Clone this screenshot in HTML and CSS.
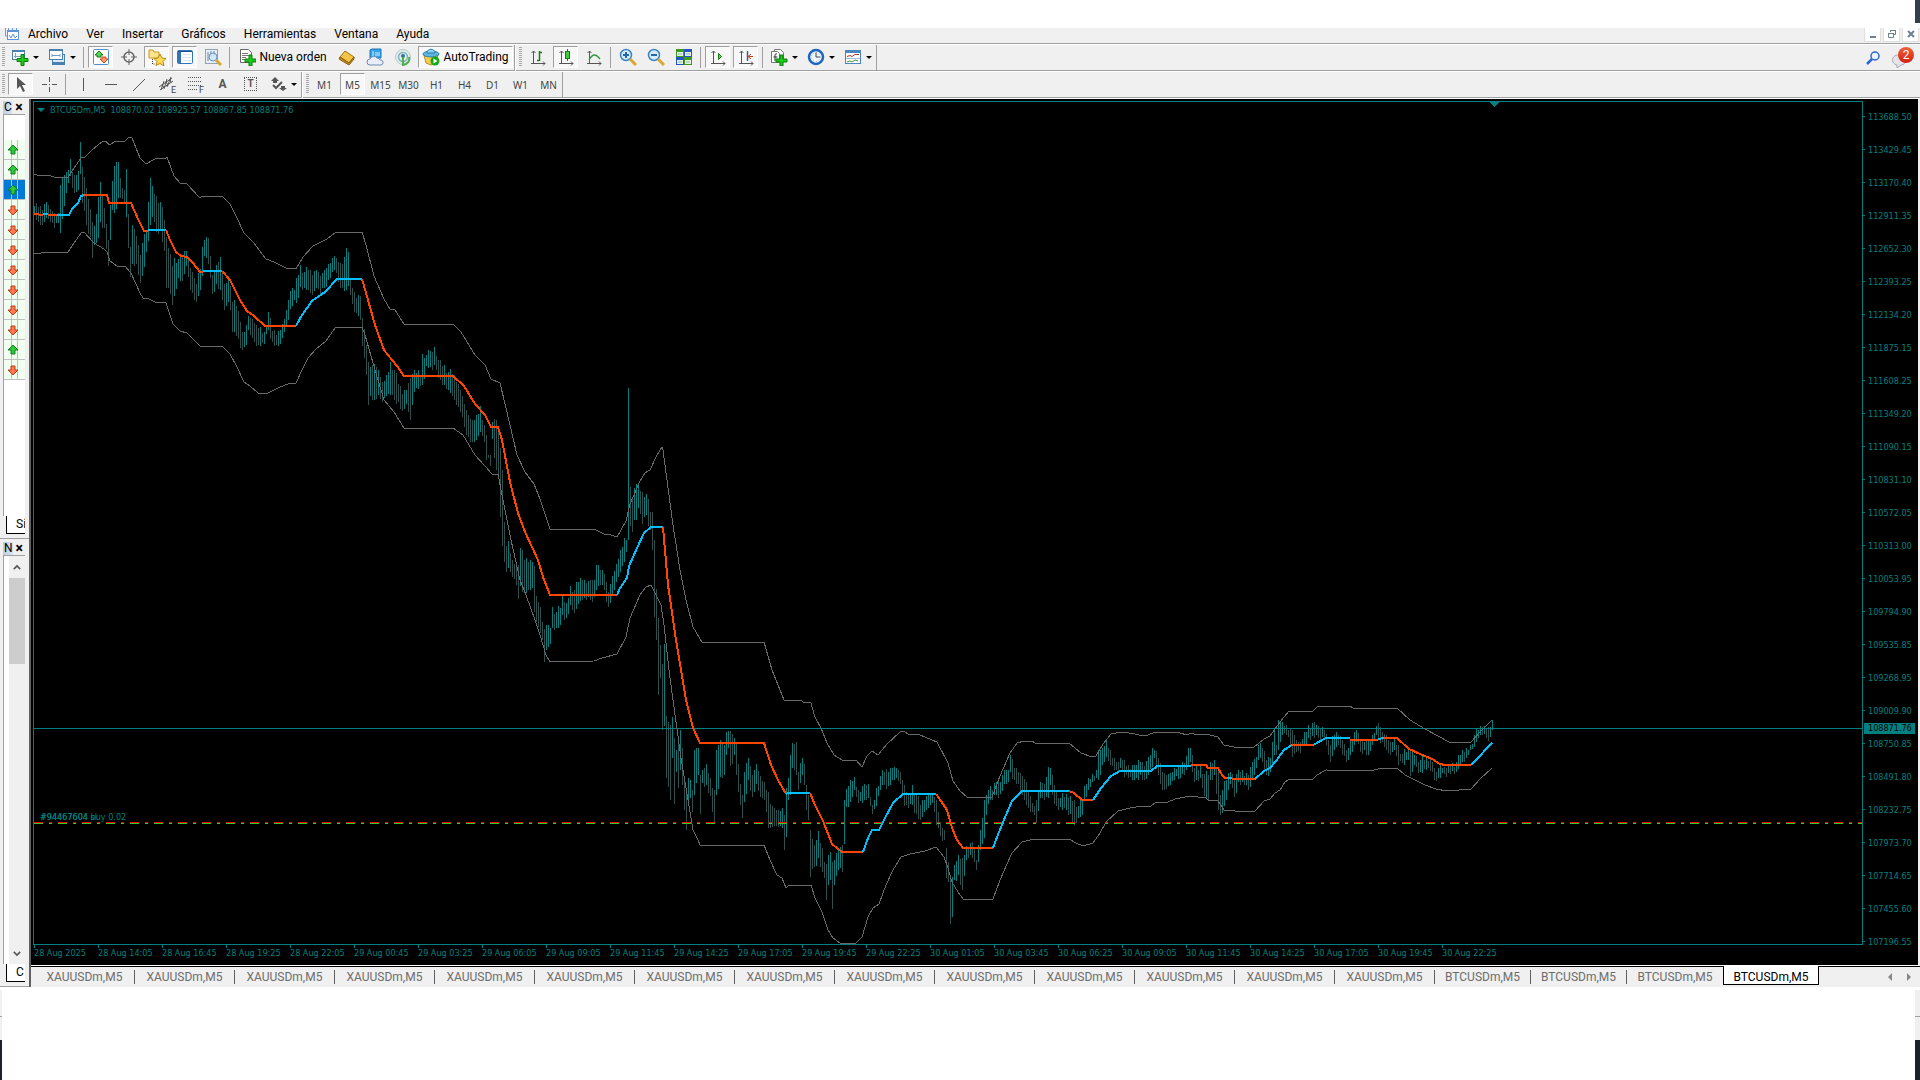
FILE: index.html
```html
<!DOCTYPE html>
<html lang="es">
<head>
    <meta charset="UTF-8">
    <meta name="viewport" content="width=device-width, initial-scale=1.0">
    <title>BTCUSDm,M5</title>
    <link rel="stylesheet" href="styles.css">
</head>
<body>
    <header class="title-strip"><span class="desktop-edge"></span></header>

    <!-- Menu -->
    <nav class="menubar" aria-label="Menú">
        <svg class="app-icon" viewBox="0 0 16 12" aria-hidden="true"><path d="M1.500 0v8H4M4.500 0v2M8.500 0v2M12.500 0v2" fill="none" stroke="#6b9be0"/><rect x="3.500" y="2.500" width="11" height="9" fill="#fff" stroke="#5f93dd"/><path d="M3 3h12" stroke="#5f93dd" stroke-width="2"/><path d="M5 7l2 3 2-4 2 4 2-2" fill="none" stroke="#5f93dd"/></svg>
        <a href="#">Archivo</a>
        <a href="#">Ver</a>
        <a href="#">Insertar</a>
        <a href="#">Gráficos</a>
        <a href="#">Herramientas</a>
        <a href="#">Ventana</a>
        <a href="#">Ayuda</a>
        <div class="window-buttons">
            <button aria-label="Minimizar"><svg viewBox="0 0 10 10"><path d="M2 8h6" stroke="#6f8194" stroke-width="2"/></svg></button>
            <button aria-label="Restaurar"><svg viewBox="0 0 10 10"><path d="M3.500 3V1.500h5v4H7M3 1.500h6M1.500 4.500h5v4h-5zM1 4.500h6" fill="none" stroke="#6f8194"/></svg></button>
            <button aria-label="Cerrar"><svg viewBox="0 0 10 10"><path d="M2 2l6 6M8 2l-6 6" stroke="#6f8194" stroke-width="2"/></svg></button>
        </div>
    </nav>

    <!-- Standard toolbar -->
    <div class="toolbar">
        <div class="band">
            <span class="grip"></span>
            <button class="tool drop" aria-label="Nuevo gráfico"><svg viewBox="0 0 18 18"><rect x="1.500" y="2.500" width="12" height="9" fill="#fff" stroke="#4a7fae"/><path d="M1 3h13" stroke="#4a7fae" stroke-width="2"/><path d="M4.500 5v5M3 8.500h8" stroke="#7f9db5"/><path class="plus" d="M10 6.500h3v4h4v3h-4v4h-3v-4H6v-3h4z"/></svg></button>
            <button class="tool drop" aria-label="Perfiles"><svg viewBox="0 0 18 18"><rect x="4.500" y="6.500" width="12" height="10" fill="#d7e8f8" stroke="#4a7fae"/><rect x="1.500" y="1.500" width="13" height="10" fill="#fff" stroke="#4a7fae"/><path d="M1 2h14M4 15h12" stroke="#4a7fae" stroke-width="2"/><path d="M4 7.500h8M4 6v3M12 6v3" stroke="#6f9fc4"/></svg></button>
            <span class="sep"></span>
            <button class="tool on" aria-label="Observación de mercado"><svg viewBox="0 0 18 18"><rect x="1.500" y="1.500" width="15" height="15" rx="1" fill="#fff" stroke="#4f8fcc"/><path d="M7 3l4 4H9v2H5V7H3z" fill="#5fd05f" stroke="#118011"/><path d="M12 15l-4-4h2V9h4v2h2z" fill="#ff9a6c" stroke="#d8481c"/></svg></button>
            <button class="tool" aria-label="Ventana de datos"><svg viewBox="0 0 18 18"><circle cx="9" cy="9" r="5" fill="none" stroke="#666" stroke-width="1.500"/><path d="M9 1v6M9 11v6M1 9h6M11 9h6" stroke="#666"/></svg></button>
            <button class="tool on" aria-label="Navegador"><svg viewBox="0 0 18 18"><path d="M1 2h4l1 2h5v6H1z" fill="#ffe38a" stroke="#c79a2b"/><path d="M4.500 11v5h3" fill="none" stroke="#444" stroke-dasharray="1 1"/><path d="M12 6l2 4 4 .5-3 3 1 4.500-4-2.500L8 17.500l1-4-3-3 4-.5z" fill="#ffd94f" stroke="#b78619"/></svg></button>
            <button class="tool on" aria-label="Terminal"><svg viewBox="0 0 18 18"><rect x="1.500" y="2.500" width="15" height="13" rx="1" fill="#fff" stroke="#3275b8"/><path d="M2 3.500h14" stroke="#1d4f8b"/><path d="M3.500 4v11" stroke="#3275b8" stroke-width="3"/><path d="M7 6.500h8M7 9.500h8M7 12.500h8" stroke="#d9e4ee"/></svg></button>
            <button class="tool" aria-label="Probador de estrategias"><svg viewBox="0 0 18 18"><rect x="1.500" y="1.500" width="12" height="14" fill="#e8f0f6" stroke="#8ba4b8"/><path d="M4 4v9M7 3v6M10 3v5" stroke="#6b88a0"/><circle cx="9" cy="9" r="4" fill="#cfe6f8" fill-opacity=".8" stroke="#6297c4"/><path d="M12 12l5 5" stroke="#d8a72f" stroke-width="3"/></svg></button>
            <span class="sep"></span>
            <button class="tool order"><svg viewBox="0 0 18 18"><path d="M2.500 1.500h8l3 3v10h-11z" fill="#fff" stroke="#666"/><path d="M4 5.500h6M4 7.500h7M4 9.500h4M4 11.500h3" stroke="#777"/><path class="plus" d="M11 7h3v4h4v3h-4v4h-3v-4H7v-3h4z"/></svg>Nueva orden</button>
            <button class="tool" aria-label="MetaEditor"><svg viewBox="0 0 18 18"><path d="M7 3l9 6-5 6-9-6z" fill="#f3c448" stroke="#a0721a"/><path d="M2 9l9 6 5-6v2l-5 6-10-6z" fill="#c58a1e" stroke="#8a5d10"/></svg></button>
            <button class="tool" aria-label="VPS"><svg viewBox="0 0 18 18"><path d="M4 2l2-1h9v9H4z" fill="#37a2ea" stroke="#1976bd"/><path d="M7 3v7M9 5h5M9 7h5" stroke="#d6f0ff"/><path d="M4 17a3 3 0 010-6 4 4 0 017-1 3 3 0 013 2 2.500 2.500 0 011 5z" fill="#e7eef8" stroke="#6d8bb5"/></svg></button>
            <button class="tool" aria-label="Señales"><svg viewBox="0 0 18 18"><circle cx="9" cy="9" r="7.500" fill="#e3efe6" stroke="#b6cbd2"/><circle cx="9" cy="9" r="4.500" fill="none" stroke="#7fb0bb" stroke-width="1.500"/><circle cx="9" cy="8" r="2" fill="#2f6fb0"/><path d="M9 9v8c5-1 7-4 6-8" fill="none" stroke="#4fae4f" stroke-width="2"/></svg></button>
            <button class="tool on auto"><svg viewBox="0 0 18 18"><path d="M2 7h14l-2 8-5 2-5-2z" fill="#f3cf4f" stroke="#b98c20"/><ellipse cx="9" cy="6" rx="8" ry="3" fill="#5fb4e0" stroke="#2d80b0"/><path d="M5 5c0-5 8-5 8 0z" fill="#8dd0f0" stroke="#2d80b0"/><circle cx="13" cy="13" r="4.500" fill="#19a819"/><path d="M11.500 10.500v5l4-2.500z" fill="#fff"/></svg>AutoTrading</button>
        </div>
        <div class="band">
            <span class="grip"></span>
            <button class="tool" aria-label="Barras"><svg viewBox="0 0 18 18"><path class="axes" d="M4.500 3v13M2 15.500h14M2.500 5l2-2 2 2M14 13.500l2 2-2 2"/><path d="M10.500 3v10M8 12.500h2M11 4.500h2" stroke="#138013" stroke-width="1.500"/></svg></button>
            <button class="tool on" aria-label="Velas"><svg viewBox="0 0 18 18"><path class="axes" d="M4.500 3v13M2 15.500h14M2.500 5l2-2 2 2M14 13.500l2 2-2 2"/><path d="M10.500 1v12" stroke="#138013"/><rect x="8.500" y="3.500" width="4" height="7" fill="#3ccc3c" stroke="#138013"/></svg></button>
            <button class="tool" aria-label="Línea"><svg viewBox="0 0 18 18"><path class="axes" d="M4.500 3v13M2 15.500h14M2.500 5l2-2 2 2M14 13.500l2 2-2 2"/><path d="M4 12c4-7 7-6 11-1" fill="none" stroke="#2f9a3f" stroke-width="1.500"/></svg></button>
            <span class="sep"></span>
            <button class="tool" aria-label="Acercar"><svg viewBox="0 0 18 18"><circle cx="7" cy="7" r="5.500" fill="#d6ecfb" stroke="#3c84c4" stroke-width="1.500"/><path d="M4 7h6M7 4v6" stroke="#2468a8" stroke-width="2"/><path d="M11 11l6 6" stroke="#d8a72f" stroke-width="3"/></svg></button>
            <button class="tool" aria-label="Alejar"><svg viewBox="0 0 18 18"><circle cx="7" cy="7" r="5.500" fill="#d6ecfb" stroke="#3c84c4" stroke-width="1.500"/><path d="M4 7h6" stroke="#2468a8" stroke-width="2"/><path d="M11 11l6 6" stroke="#d8a72f" stroke-width="3"/></svg></button>
            <button class="tool" aria-label="Mosaico"><svg viewBox="0 0 18 18"><path d="M1 1h8v8H1zM9 9h8v8H9z" fill="#3f9a1c"/><path d="M9 1h8v8H9zM1 9h8v8H1z" fill="#2354c4"/><path d="M2 4h6v4H2zM10 4h6v4h-6zM2 12h6v4H2zM10 12h6v4h-6z" fill="#e6f2e0"/><path d="M3 6h4M11 6h4M3 14h4M11 14h4" stroke="#8ab0c8"/></svg></button>
            <span class="sep"></span>
            <button class="tool on" aria-label="Autodesplazamiento"><svg viewBox="0 0 18 18"><path class="axes" d="M4.500 3v13M2 15.500h14M2.500 5l2-2 2 2M14 13.500l2 2-2 2"/><path d="M9.500 5.500v6l3-3z" fill="#5fd05f" stroke="#138013"/></svg></button>
            <button class="tool on" aria-label="Desplazamiento"><svg viewBox="0 0 18 18"><path class="axes" d="M4.500 3v13M2 15.500h14M2.500 5l2-2 2 2M14 13.500l2 2-2 2"/><path d="M10.500 3v10" stroke="#2468a8" stroke-width="1.500"/><path d="M16 8.500h-4M14 6l-3 2.500 3 2.500" fill="none" stroke="#c83c10"/></svg></button>
            <span class="sep"></span>
            <button class="tool drop" aria-label="Indicadores"><svg viewBox="0 0 18 18"><path d="M4.500 1.500h6l3 3v8h-9z" fill="#fff" stroke="#777"/><path d="M1.500 3.500h6l2 2v9h-8z" fill="#fff" stroke="#777"/><path d="M7 6c-2-1-2 1-2 2v5M3.500 9h4" fill="none" stroke="#333"/><path class="plus" d="M10 7h3v4h4v3h-4v4h-3v-4H6v-3h4z"/></svg></button>
            <button class="tool drop" aria-label="Periodos"><svg viewBox="0 0 18 18"><circle cx="9" cy="9" r="7" fill="#eef6fd" stroke="#1d66c0" stroke-width="2.500"/><circle cx="9" cy="9" r="4.500" fill="none" stroke="#9ab6cc" stroke-dasharray="1 2"/><path d="M9 4.500V9h4" fill="none" stroke="#444"/></svg></button>
            <button class="tool drop" aria-label="Plantillas"><svg viewBox="0 0 18 18"><rect x="1.500" y="2.500" width="15" height="13" fill="#fff" stroke="#4a86be"/><path d="M1 3.500h16" stroke="#4a86be" stroke-width="3"/><path d="M3 8.500l3-1 2 1 3-2h4" fill="none" stroke="#a04030"/><path d="M2 10.500h14" stroke="#9dbdd8"/><path d="M3 14l3-1 2 1 3-2 3 1" fill="none" stroke="#3f9a3f"/></svg></button>
        </div>
        <div class="right-tools">
            <button class="plain" aria-label="Buscar"><svg viewBox="0 0 14 14"><circle cx="9" cy="5" r="4" fill="#eaf3ff" stroke="#2c66d0" stroke-width="1.500"/><path d="M6 8l-5 5" stroke="#2c66d0" stroke-width="2.500"/></svg></button>
            <button class="plain chat" aria-label="Mensajes"><svg viewBox="0 0 22 20"><path d="M7 7c-9 0-8 9-2 10v3l4-3c6 0 8-10-2-10z" fill="#e4e4ea" stroke="#a8a8b0"/></svg><span class="badge">2</span></button>
        </div>
    </div>

    <!-- Drawing tools and time frames -->
    <div class="toolbar">
        <div class="band">
            <span class="grip"></span>
            <button class="tool on" aria-label="Cursor"><svg viewBox="0 0 18 18"><path d="M5 2v12l3-3 3 6 2-1-3-6h4z" fill="#555"/></svg></button>
            <button class="tool" aria-label="Cruz"><svg viewBox="0 0 18 18"><path class="ink" d="M9.500 2v5M9.500 12v5M2 9.500h5M12 9.500h5M9 9.500h1"/></svg></button>
            <span class="sep"></span>
            <button class="tool" aria-label="Línea vertical"><svg viewBox="0 0 18 18"><path class="ink" d="M9.500 3v13"/></svg></button>
            <button class="tool" aria-label="Línea horizontal"><svg viewBox="0 0 18 18"><path class="ink" d="M3 9.500h12"/></svg></button>
            <button class="tool" aria-label="Línea de tendencia"><svg viewBox="0 0 18 18"><path class="ink" d="M3 16L15 4"/></svg></button>
            <button class="tool sub" data-sub="E" aria-label="Canal equidistante"><svg viewBox="0 0 18 18"><path class="ink" d="M1 12L14 3M2 15L15 6M3 15l3-9M6 14l3-10M9 12l4-10M4 9l2 4M8 6l2 5M12 4l1 4"/></svg></button>
            <button class="tool sub" data-sub="F" aria-label="Fibonacci"><svg viewBox="0 0 18 18"><path class="ink" d="M2 2.500h14M2 6.500h14M2 10.500h14M2 14.500h9" stroke-dasharray="1 1"/></svg></button>
            <button class="tool letter" aria-label="Texto">A</button>
            <button class="tool letter" aria-label="Etiqueta"><span class="label-box">T</span></button>
            <button class="tool drop" aria-label="Flechas"><svg viewBox="0 0 18 18"><path d="M6 2l4 4H8v2H4V6H2zM14 16l-4-3h2v-2h4v2h2z" fill="#555"/><path d="M4 10l3 3 6-6" fill="none" stroke="#555" stroke-width="2"/></svg></button>
        </div>
        <div class="band">
            <span class="grip"></span>
            <button class="tool time">M1</button>
            <button class="tool time on">M5</button>
            <button class="tool time">M15</button>
            <button class="tool time">M30</button>
            <button class="tool time">H1</button>
            <button class="tool time">H4</button>
            <button class="tool time">D1</button>
            <button class="tool time">W1</button>
            <button class="tool time">MN</button>
        </div>
    </div>

    <div class="workspace">
        <aside class="side">
            <section class="panel market">
                <div class="panel-head"><span>C</span><button aria-label="Cerrar panel">×</button></div>
                <ul class="symbols" id="symbols"></ul>
                <div class="panel-tab"><span>Sí</span></div>
            </section>
            <section class="panel navigator">
                <div class="panel-head"><span>N</span><button aria-label="Cerrar panel">×</button></div>
                <div class="scroller">
                    <button aria-label="Subir"><svg viewBox="0 0 10 8"><path d="M1 6l4-4 4 4" fill="none" stroke="#555" stroke-width="2"/></svg></button>
                    <span class="thumb"></span>
                    <button aria-label="Bajar"><svg viewBox="0 0 10 8"><path d="M1 2l4 4 4-4" fill="none" stroke="#555" stroke-width="2"/></svg></button>
                </div>
                <div class="panel-tab"><span>C</span></div>
            </section>
        </aside>

        <main class="charts">
            <div class="chart">
                <div class="plot">
                    <svg id="plot" viewBox="34 102 1828 842" preserveAspectRatio="none"></svg>
                    <p class="quote"><svg viewBox="0 0 8 4"><path d="M0 0h8L4 4z" fill="#008080"/></svg><span>BTCUSDm,M5</span> <span>108870.02 108925.57 108867.85 108871.76</span></p>
                    <span class="position">#94467604 buy 0.02</span>
                    <span class="position stop">#94467604 sl</span>
                </div>
                <ol class="prices" id="prices"></ol>
                <ol class="times" id="times"></ol>
            </div>
            <nav class="tabs" aria-label="Gráficos abiertos">
                <a href="#">XAUUSDm,M5</a>
                <a href="#">XAUUSDm,M5</a>
                <a href="#">XAUUSDm,M5</a>
                <a href="#">XAUUSDm,M5</a>
                <a href="#">XAUUSDm,M5</a>
                <a href="#">XAUUSDm,M5</a>
                <a href="#">XAUUSDm,M5</a>
                <a href="#">XAUUSDm,M5</a>
                <a href="#">XAUUSDm,M5</a>
                <a href="#">XAUUSDm,M5</a>
                <a href="#">XAUUSDm,M5</a>
                <a href="#">XAUUSDm,M5</a>
                <a href="#">XAUUSDm,M5</a>
                <a href="#">XAUUSDm,M5</a>
                <a href="#" class="btc">BTCUSDm,M5</a>
                <a href="#" class="btc">BTCUSDm,M5</a>
                <a href="#" class="btc last">BTCUSDm,M5</a>
                <a href="#" class="btc active">BTCUSDm,M5</a>
                <div class="tab-scroll">
                    <button aria-label="Anterior"><svg viewBox="0 0 4 8"><path d="M4 0v8L0 4z" fill="#888"/></svg></button>
                    <button aria-label="Siguiente"><svg viewBox="0 0 4 8"><path d="M0 0v8l4-4z" fill="#888"/></svg></button>
                </div>
            </nav>
        </main>
    </div>

    <footer class="bottom">
        <span class="bottom-left"></span>
        <span class="bottom-right"></span>
    </footer>

    <script src="chart.js"></script>
</body>
</html>
```

FILE: styles.css
```css
* {
    box-sizing: border-box;
}

body {
    margin: 0;
    height: 100vh;
    display: flex;
    flex-direction: column;
    overflow: hidden;
    background: #f0f0f0;
    color: #000;
    font-family: Roboto, "Open Sans", sans-serif;
    font-size: 12px;
}

ul, ol, p {
    margin: 0;
    padding: 0;
    list-style: none;
}

a {
    color: inherit;
    text-decoration: none;
}

button {
    padding: 0;
    border: 0;
    background: none;
    color: inherit;
    font: inherit;
}

svg {
    display: block;
    flex: none;
}

.title-strip {
    height: 28px;
    flex: none;
    background: #fff;
    display: flex;
    justify-content: flex-end;
}

.desktop-edge {
    width: 5px;
    height: 23px;
    background: #323e4c;
}

/* Menu */
.menubar {
    height: 17px;
    flex: none;
    display: flex;
    gap: 18px;
    padding-left: 4px;
    line-height: 12px;
    border-bottom: 1px solid #fff;
    box-shadow: inset 0 -1px #a0a0a0;
}

.app-icon {
    width: 16px;
    height: 12px;
    margin-right: -10px;
}

.window-buttons {
    display: flex;
    gap: 2px;
    margin-left: auto;
    padding-right: 1px;
}

.window-buttons button {
    width: 17px;
    height: 14px;
    padding: 0 3px 2px;
    background: #fff;
    border: 1px solid #e0e0e0;
    border-top: 0;
}

.window-buttons svg {
    width: 10px;
    height: 10px;
}

/* Toolbars */
.toolbar {
    height: 27px;
    flex: none;
    display: flex;
    border-bottom: 1px solid #fff;
    box-shadow: inset 0 -1px #a0a0a0;
}

.band {
    display: flex;
    gap: 3px;
    align-items: center;
    padding: 0 1px 2px 2px;
    border-right: 1px solid #a0a0a0;
}

.band + .band {
    padding-left: 3px;
    border-left: 1px solid #fff;
}

.grip {
    width: 3px;
    height: 20px;
    background: repeating-linear-gradient(#a8a8a8 0 1px, #f0f0f0 1px 2px);
}

.sep {
    width: 3px;
    height: 21px;
    border-left: 1px solid #f0f0f0;
    background: linear-gradient(90deg, #a0a0a0 0 1px, #f0f0f0 1px);
}

.tool {
    width: 25px;
    height: 22px;
    display: flex;
    align-items: center;
    justify-content: center;
    gap: 3px;
    border: 1px solid transparent;
    white-space: nowrap;
}

.tool svg {
    width: 18px;
    height: 18px;
}

.tool.on {
    background: #f8f8f8;
    border-color: #a0a0a0 #fff #fff #a0a0a0;
}

.tool.drop {
    width: 34px;
    gap: 4px;
}

.tool.drop::after {
    content: "";
    border: 3px solid transparent;
    border-top-color: #000;
    border-bottom: 0;
}

.tool.order {
    width: 97px;
}

.tool.auto {
    width: 95px;
}

.tool.time {
    padding-top: 1px;
    color: #444;
    font-family: "Noto Sans", sans-serif;
    font-size: 10px;
}

.tool.letter {
    color: #555;
    font-weight: bold;
}

.label-box {
    width: 13px;
    border: 1px dotted #555;
    font-size: 10px;
    line-height: 12px;
}

.tool.sub {
    position: relative;
}

.tool.sub::after {
    content: attr(data-sub);
    position: absolute;
    right: 2px;
    bottom: 0;
    padding-left: 1px;
    background: #f0f0f0;
    color: #444;
    font-size: 9px;
    line-height: 8px;
}

.plus {
    fill: #19cc19;
    stroke: #0c7a0c;
}

.axes {
    fill: none;
    stroke: #555;
}

.ink {
    fill: none;
    stroke: #555;
}

.right-tools {
    display: flex;
    align-items: flex-start;
    gap: 12px;
    margin-left: auto;
    padding: 2px 6px 0 0;
}

.plain svg {
    width: 14px;
    height: 14px;
    margin-top: 4px;
}

.plain.chat {
    position: relative;
}

.plain.chat svg {
    width: 22px;
    height: 20px;
    margin-top: 1px;
}

.badge {
    position: absolute;
    top: 0;
    right: 0;
    width: 16px;
    height: 16px;
    border-radius: 8px;
    background: linear-gradient(#f0603c, #d42010);
    color: #fff;
    line-height: 16px;
    text-align: center;
}

/* Docked panels */
.workspace {
    flex: 1;
    min-height: 0;
    display: flex;
    border-bottom: 3px solid #fff;
}

.side {
    width: 31px;
    flex: none;
    display: flex;
    flex-direction: column;
    border-right: 2px solid #606060;
}

.panel {
    display: flex;
    flex-direction: column;
    padding: 1px 4px 2px 3px;
    border-bottom: 1px solid #a0a0a0;
}

.market {
    height: 440px;
}

.navigator {
    flex: 1;
    padding-top: 2px;
}

.panel-head {
    height: 14px;
    display: flex;
    align-items: center;
    gap: 1px;
    line-height: 13px;
}

.panel-head span {
    width: 10px;
    padding-left: 1px;
    background: linear-gradient(90deg, #bccde0, #d8e4f0);
    text-align: center;
}

.panel-head button {
    width: 14px;
    font-size: 14px;
    font-weight: bold;
}

.symbols {
    flex: 1;
    padding-top: 25px;
    background: #fff;
    border: 1px solid #a0a0a0;
    border-width: 1px 0 0 1px;
}

.symbols li {
    height: 20px;
    display: flex;
    align-items: center;
    padding-left: 3px;
    border-bottom: 1px solid #c0c0c0;
    background: linear-gradient(90deg, transparent 7px, #c0c0c0 7px 8px, transparent 8px 13px, #c0c0c0 13px 14px, transparent 14px) #f0fff0;
}

.symbols li.selected {
    background-color: #0078d7;
}

.symbols svg {
    width: 12px;
    height: 10px;
}

.panel-tab {
    height: 20px;
    padding-left: 3px;
    background: #f0f0f0;
}

.panel-tab span {
    display: block;
    height: 18px;
    padding-left: 9px;
    background: #fff;
    border-left: 1px solid #000;
    border-bottom: 1px solid #000;
    line-height: 17px;
    overflow: hidden;
}

.scroller {
    flex: 1;
    display: flex;
    flex-direction: column;
    padding-left: 5px;
    background: linear-gradient(90deg, #fff 5px, #f0f0f0 5px);
    border-top: 1px solid #a0a0a0;
    border-left: 1px solid #a0a0a0;
}

.scroller button {
    height: 22px;
    display: flex;
    align-items: center;
    justify-content: center;
}

.scroller button svg {
    width: 8px;
    height: 7px;
}

.thumb {
    height: 86px;
    margin-bottom: auto;
    background: #cdcdcd;
}

/* Chart */
.charts {
    flex: 1;
    min-width: 0;
    display: flex;
    flex-direction: column;
}

.chart {
    flex: 1;
    min-height: 0;
    display: grid;
    grid-template-columns: 1fr 55px;
    grid-template-rows: 1fr 20px;
    padding: 2px 0 0 2px;
    background: #000;
    border-right: 2px solid #f0f0f0;
    color: #008080;
    font-family: "DejaVu Sans Condensed", "Noto Sans", sans-serif;
    font-size: 9px;
}

.plot {
    position: relative;
    min-height: 0;
    border: 1px solid #008080;
}

#plot {
    position: absolute;
    width: 100%;
    height: 100%;
    shape-rendering: crispEdges;
}

.bull { fill: #008080; }
.bear { fill: #2f4f4f; }

.channel {
    fill: none;
    stroke: #696969;
}

.trend {
    fill: none;
    stroke-width: 2;
}

.trend.down { stroke: #ff4500; }
.trend.up { stroke: #00bfff; }

.quote {
    position: absolute;
    top: 1px;
    left: 3px;
    display: flex;
    align-items: center;
    gap: 5px;
    line-height: 14px;
}

.quote svg {
    width: 8px;
    height: 4px;
}

.position {
    position: absolute;
    top: 84%;
    left: 6px;
    line-height: 16px;
}

.prices {
    position: relative;
    grid-column: 2;
    grid-row: 1 / 3;
    margin-top: -1px;
}

.prices li {
    height: 33px;
    display: flex;
    align-items: center;
    gap: 3px;
}

.prices li::before {
    content: "";
    width: 2px;
    height: 1px;
    background: #008080;
}

.prices .bid {
    position: absolute;
    top: 72%;
    left: 1px;
    width: 51px;
    height: 11px;
    padding-left: 4px;
    background: #008080;
    color: #000;
}

.prices .bid::before {
    content: none;
}

.times {
    display: flex;
    padding-left: 1px;
    white-space: nowrap;
}

.times li {
    width: 64px;
    flex: none;
    line-height: 11px;
}

.times li::before {
    content: "";
    display: block;
    width: 1px;
    height: 3px;
    background: #008080;
}

/* Chart tabs */
.tabs {
    height: 22px;
    flex: none;
    display: flex;
    padding-left: 4px;
    border-top: 1px solid #fff;
    box-shadow: inset 0 1px #000;
    color: #6d6d6d;
    line-height: 14px;
}

.tabs a {
    width: 100px;
    height: 14px;
    margin-top: 4px;
    border-right: 1px solid #606060;
    text-align: center;
}

.tabs a.btc {
    width: 96px;
}

.tabs a.last {
    border-right: 0;
}

.tabs a.active {
    height: 19px;
    margin-top: 0;
    padding-top: 4px;
    background: #fff;
    border: 1px solid #000;
    border-top: 0;
    color: #000;
}

.tab-scroll {
    display: flex;
    gap: 15px;
    margin-left: auto;
    padding-right: 9px;
}

.tab-scroll svg {
    width: 4px;
    height: 8px;
}

/* Area under the terminal */
.bottom {
    height: 90px;
    flex: none;
    display: flex;
    justify-content: space-between;
    background: #fff;
}

.bottom-left, .bottom-right {
    background: linear-gradient(#f0f0f0 26px, #a0a0a0 26px 27px, #f0f0f0 27px 50px, #1c222c 50px);
}

.bottom-left {
    width: 2px;
}

.bottom-right {
    width: 5px;
}
```

FILE: chart.js
```js
const SVG_NS = 'http://www.w3.org/2000/svg';
const plot = document.getElementById('plot');

function add(tag, attrs) {
    const el = document.createElementNS(SVG_NS, tag);
    for (const key in attrs) el.setAttribute(key, attrs[key]);
    plot.appendChild(el);
}

// x, high, low
const bars = `34,206,214 38,207,222 42,210,225 46,202,218 50,209,222 54,213,228 58,213,223 60,185,233 64,175,206 68,170,183 70,159,176 72,172,188 76,175,192 78,171,190 80,142,174 82,167,203 86,188,225 90,209,237 92,222,258 94,226,245 98,197,238 100,182,222 104,208,228 108,240,266 110,205,240 112,181,210 114,166,213 118,162,198 120,178,198 124,190,203 126,169,217 128,214,248 130,247,277 132,225,264 136,236,264 140,255,283 142,243,276 146,232,252 150,178,225 152,186,217 156,196,232 160,202,229 164,220,251 166,237,288 170,254,294 172,266,305 174,258,296 178,259,278 182,257,281 186,251,266 190,268,290 194,278,300 196,284,302 200,269,290 202,247,276 204,240,256 208,238,264 210,256,278 212,275,294 216,265,284 220,257,290 222,272,300 224,284,310 228,276,302 230,286,310 232,302,332 236,306,336 240,322,348 242,332,350 246,325,345 248,316,330 252,319,338 256,325,346 260,327,346 264,332,344 268,312,330 272,331,342 276,335,345 280,330,344 284,319,332 288,300,320 290,291,309 294,290,300 296,278,303 300,265,287 304,272,288 308,270,290 312,275,295 316,270,288 320,276,294 324,270,288 328,264,280 332,258,272 334,256,270 338,262,282 342,264,288 346,248,290 348,252,286 350,278,295 354,292,312 358,295,316 360,296,320 362,318,346 366,345,375 368,362,405 370,367,396 374,364,400 378,370,395 382,382,402 386,375,396 390,362,395 394,370,400 398,384,402 402,394,411 406,390,404 410,378,420 414,370,392 420,375,386 422,354,385 426,355,366 428,350,368 432,352,370 434,347,365 436,356,370 440,360,380 444,365,385 448,372,390 452,374,396 456,382,405 460,390,412 464,404,427 468,415,437 472,420,442 476,415,440 480,406,432 484,425,442 486,435,460 488,455,458 490,455,466 492,422,439 496,420,470 498,430,476 500,448,517 502,470,546 504,522,562 506,546,572 508,541,568 512,560,577 516,562,585 518,565,599 520,548,586 524,560,592 528,562,590 532,562,588 534,566,612 536,596,622 540,607,633 542,622,640 544,629,662 546,625,650 550,628,644 552,607,628 556,612,628 560,608,625 562,596,615 566,603,618 570,586,605 574,590,613 578,582,604 582,580,600 586,583,600 590,580,600 594,580,597 596,565,590 600,570,585 604,574,590 608,592,607 612,576,595 616,564,582 620,550,572 624,538,562 626,540,552 628,388,540 630,487,526 632,497,532 634,488,520 636,484,520 638,484,508 642,492,524 646,494,515 650,512,530 652,512,550 654,540,617 656,589,640 658,618,695 660,645,678 662,664,730 664,644,726 666,716,778 670,725,800 672,717,758 674,738,804 676,750,772 678,740,788 680,730,770 682,748,785 684,776,810 686,790,830 688,778,800 690,780,798 692,790,812 694,750,795 698,748,775 700,775,814 702,770,783 706,764,785 710,778,796 712,788,812 714,790,823 716,750,795 720,740,777 724,745,775 726,732,755 728,731,748 730,731,766 734,738,755 736,744,775 738,764,792 740,784,805 742,795,818 744,772,802 748,758,780 752,775,797 756,764,784 760,776,797 764,782,800 768,792,828 770,804,828 774,808,826 778,810,827 782,808,828 784,815,850 786,788,837 788,778,800 790,755,795 792,743,768 796,742,775 798,772,790 802,758,775 804,764,785 806,785,810 808,795,820 810,830,877 814,845,867 818,831,858 822,848,872 824,862,878 826,864,900 828,855,885 830,852,880 832,862,909 834,860,885 838,850,870 842,845,872 844,800,844 846,789,807 850,780,802 854,777,790 858,790,803 864,784,800 868,784,798 872,805,814 876,788,806 880,776,790 884,772,785 888,772,786 892,768,780 896,768,778 900,772,784 904,785,806 908,795,808 912,785,805 916,795,814 920,805,820 924,800,812 928,795,808 932,793,803 936,800,825 940,822,836 944,830,840 946,848,878 948,862,882 950,879,924 952,877,917 954,865,880 958,855,875 962,858,890 966,846,860 970,843,855 974,848,862 976,860,870 978,845,862 980,830,850 984,800,838 986,795,815 988,790,804 992,790,800 996,782,795 1000,782,794 1004,770,784 1008,770,782 1010,755,772 1014,768,780 1018,772,784 1022,776,795 1026,782,805 1030,796,812 1034,806,815 1036,800,823 1040,782,798 1044,784,800 1048,767,798 1050,768,785 1054,785,804 1058,798,810 1064,797,808 1070,796,814 1074,800,825 1078,806,818 1082,800,815 1084,786,800 1088,778,790 1092,774,782 1096,770,778 1098,750,780 1102,748,765 1106,740,757 1110,750,765 1116,762,770 1122,760,772 1128,765,778 1134,765,780 1140,762,775 1144,766,780 1148,757,775 1154,750,758 1158,758,775 1162,772,790 1166,775,789 1170,773,785 1174,768,780 1180,766,778 1186,756,770 1190,748,762 1194,768,782 1200,766,778 1204,774,796 1208,775,800 1210,762,780 1214,760,775 1218,770,810 1220,795,815 1222,790,813 1226,780,800 1230,772,784 1234,780,797 1238,770,782 1244,776,785 1248,775,790 1252,762,778 1256,757,768 1258,745,760 1262,748,762 1266,760,775 1270,758,772 1274,728,755 1276,745,755 1278,720,750 1282,722,735 1286,725,735 1290,728,745 1292,730,757 1296,740,752 1300,742,753 1304,732,745 1308,725,738 1314,722,738 1318,726,738 1324,730,738 1328,740,755 1330,745,762 1334,735,750 1338,735,745 1342,740,755 1346,750,762 1348,748,760 1352,740,752 1356,730,742 1360,740,752 1364,742,750 1368,740,755 1372,735,745 1376,726,735 1378,723,740 1382,732,742 1386,735,750 1390,742,755 1394,738,750 1398,745,765 1402,754,763 1408,750,760 1410,750,776 1414,755,765 1420,760,772 1426,758,770 1432,762,772 1434,768,780 1438,768,778 1444,767,774 1450,765,774 1456,762,772 1460,755,765 1466,748,758 1470,745,750 1474,735,747 1478,730,738 1482,727,735 1486,728,738 1490,727,737 1492,720,730`
    .split(' ').map(item => item.split(',').map(Number));

function drawBar(x, high, low, previous) {
    const cls = high + low <= previous ? 'bull' : 'bear';
    add('rect', { x, y: high, width: 1, height: low - high, class: cls });
}

let previous = 420;
bars.forEach((bar, i) => {
    const [x, high, low] = bar;
    drawBar(x, high, low, previous);
    previous = high + low;
    const next = bars[i + 1];
    if (!next) return;
    // one bar every two units between the listed ones
    for (let bx = x + 2; bx < next[0]; bx += 2) {
        const t = (bx - x) / (next[0] - x);
        const shift = (bx * 7) % 9 - 4;
        const h = Math.round(high + (next[1] - high) * t) + shift;
        const l = Math.round(low + (next[2] - low) * t) + (bx * 5) % 7 - 3;
        drawBar(bx, h, Math.max(l, h + 5), previous);
        previous = h + l;
    }
});

// Current price and open position
add('rect', { x: 34, y: 728, width: 1828, height: 1, fill: '#008080' });
for (const [y, stroke] of [[822.5, '#ff0000'], [823.5, '#32cd32']]) {
    add('path', { d: `M34 ${y}H1862`, stroke, 'stroke-dasharray': '9 6 3 6' });
}

// Channel
const channels = [
    '34,174 40,176 48,175 57,178 68,177 74,168 81,158 85,157 92,150 103,141 106,141 109,145 116,141 124,142 129,137 132,138 140,158 146,164 155,159 166,158 167,157 174,176 180,183 187,184 200,198 202,196 222,196 230,204 237,218 244,233 253,242 266,259 274,262 286,268 296,269 303,257 313,246 327,239 336,232 362,232 366,245 374,276 384,299 390,309 395,310 404,324 453,324 461,332 475,355 485,365 491,379 500,383 506,408 517,455 525,472 534,484 540,499 550,529 594,529 604,534 611,535 617,537 626,521 630,504 640,481 645,473 650,470 657,455 662,447 663,450 667,480 673,525 680,570 686,600 693,627 702,642 764,642 772,670 784,700 801,700 803,702 811,703 815,717 821,728 827,743 834,755 842,760 856,760 862,767 867,756 872,751 878,755 887,744 900,732 904,731 908,734 920,735 937,742 948,763 953,781 960,791 967,797 992,797 1000,776 1010,753 1017,743 1024,741 1032,741 1035,743 1069,743 1081,753 1092,757 1096,756 1103,744 1111,734 1122,732 1135,734 1143,736 1148,735 1155,732 1180,733 1187,735 1191,733 1194,734 1206,734 1218,737 1224,745 1234,747 1254,747 1264,739 1270,736 1280,722 1289,711 1313,711 1317,707 1330,706 1350,706 1353,708 1363,708 1370,709 1397,708 1410,720 1425,729 1438,736 1449,742 1471,742 1480,732 1492,720',
    '34,254 48,252 57,253 68,252 74,243 81,233 84,232 94,243 104,249 107,252 110,261 117,266 125,266 131,273 140,293 143,298 149,299 155,302 166,303 173,324 180,331 187,333 194,340 200,346 222,346 230,354 237,367 244,382 250,386 258,393 268,393 280,387 288,384 296,383 302,370 308,358 316,349 326,341 335,328 362,327 365,335 371,356 378,380 384,400 394,412 404,428 453,428 463,435 475,455 485,466 492,474 498,474 503,500 511,540 520,580 526,595 535,620 540,635 546,655 550,662 594,661 602,658 617,654 626,637 630,618 640,595 646,587 651,585 657,597 661,605 664,625 669,670 673,700 681,758 688,800 693,830 698,840 700,845 764,845 770,860 777,875 782,878 786,888 788,886 811,885 815,898 822,912 828,930 833,938 840,943 856,943 862,937 868,917 873,908 879,904 886,885 893,870 901,857 910,854 925,851 936,847 944,857 948,868 952,882 958,892 963,899 993,899 1000,880 1007,864 1012,853 1022,842 1034,839 1069,839 1076,843 1083,846 1093,843 1100,833 1106,822 1118,811 1130,808 1142,806 1151,806 1156,802 1168,802 1175,799 1190,796 1206,798 1208,800 1218,801 1224,810 1235,811 1255,811 1264,801 1270,799 1275,793 1280,790 1285,782 1290,779 1313,779 1317,775 1326,770 1370,771 1378,769 1384,768 1397,768 1405,775 1415,780 1425,785 1436,789 1447,791 1471,789 1480,779 1492,768'
];
channels.forEach(points => add('polyline', { points, class: 'channel' }));

// Trend line, one run per colour
const trend = [
    ['down', '34,214 43,215'],
    ['up', '43,214 48,214'],
    ['down', '48,215 57,215'],
    ['up', '57,215 69,215 72,209 78,203 81,196 84,195'],
    ['down', '84,195 107,195 109,203 131,203 138,219 144,231 148,231'],
    ['up', '148,230 166,230'],
    ['down', '166,230 170,240 176,252 181,256 187,257 193,263 200,272 203,272'],
    ['up', '203,271 222,271'],
    ['down', '222,271 230,280 240,300 247,311 254,316 265,326 296,326'],
    ['up', '296,326 302,315 312,301 325,292 337,279 362,279'],
    ['down', '362,279 368,300 375,325 384,350 392,360 397,366 404,376 453,376 464,386 475,404 485,415 491,427 498,427 502,440 510,482 518,513 525,532 532,547 538,560 543,577 550,595 617,595'],
    ['up', '617,595 620,588 627,578 629,566 637,548 644,533 651,527 663,527'],
    ['down', '663,527 668,585 676,640 686,700 693,728 700,743 764,743 771,765 778,780 786,794'],
    ['up', '786,794 788,793 810,793'],
    ['down', '810,793 815,805 823,821 832,844 842,852 863,852'],
    ['up', '863,852 868,838 872,830 879,830 885,818 893,803 903,794 936,794'],
    ['down', '936,794 941,801 947,810 952,828 957,840 963,848 993,848'],
    ['up', '993,848 999,832 1006,815 1012,801 1022,791 1069,791'],
    ['down', '1069,791 1074,793 1082,800 1093,800'],
    ['up', '1093,800 1101,788 1111,776 1120,771 1151,771 1157,766 1191,766'],
    ['down', '1191,765 1206,765 1208,768 1218,768 1222,775 1225,778 1230,778'],
    ['up', '1228,778 1232,778'],
    ['down', '1232,779 1255,779'],
    ['up', '1255,779 1264,771 1270,768 1276,761 1284,750 1292,745'],
    ['down', '1292,745 1313,745'],
    ['up', '1313,745 1326,738 1350,738'],
    ['down', '1350,740 1378,740'],
    ['up', '1378,739 1384,738'],
    ['down', '1384,738 1397,738 1409,749 1420,754 1432,759 1440,764 1445,765 1471,765'],
    ['up', '1471,765 1480,756 1487,748 1492,743']
];
trend.forEach(([dir, points]) => add('polyline', { points, class: 'trend ' + dir }));
add('path', { d: 'M1489 102h10l-5 5z', fill: '#008080' });

// Axes
const prices = ['113688.50', '113429.45', '113170.40', '112911.35', '112652.30', '112393.25', '112134.20', '111875.15', '111608.25', '111349.20', '111090.15', '110831.10', '110572.05', '110313.00', '110053.95', '109794.90', '109535.85', '109268.95', '109009.90', '108750.85', '108491.80', '108232.75', '107973.70', '107714.65', '107455.60', '107196.55'];
document.getElementById('prices').innerHTML =
    prices.map(price => `<li>${price}</li>`).join('') + '<li class="bid">108871.76</li>';

const times = ['28 Aug 2025', '28 Aug 14:05', '28 Aug 16:45', '28 Aug 19:25', '28 Aug 22:05', '29 Aug 00:45', '29 Aug 03:25', '29 Aug 06:05', '29 Aug 09:05', '29 Aug 11:45', '29 Aug 14:25', '29 Aug 17:05', '29 Aug 19:45', '29 Aug 22:25', '30 Aug 01:05', '30 Aug 03:45', '30 Aug 06:25', '30 Aug 09:05', '30 Aug 11:45', '30 Aug 14:25', '30 Aug 17:05', '30 Aug 19:45', '30 Aug 22:25'];
document.getElementById('times').innerHTML = times.map(time => `<li>${time}</li>`).join('');

// Market watch
const moves = ['up', 'up', 'up', 'down', 'down', 'down', 'down', 'down', 'down', 'down', 'up', 'down'];
const arrows = {
    up: '<path d="M6 0l5 5H8v4H4V5H1z" fill="#2fc83c" stroke="#157a1e"/>',
    down: '<path d="M6 10L1 5h3V1h4v4h3z" fill="#ff7a50" stroke="#b83a14"/>'
};
document.getElementById('symbols').innerHTML = moves.map((move, i) =>
    `<li${i === 2 ? ' class="selected"' : ''}><svg viewBox="0 0 12 10">${arrows[move]}</svg></li>`).join('');
```
